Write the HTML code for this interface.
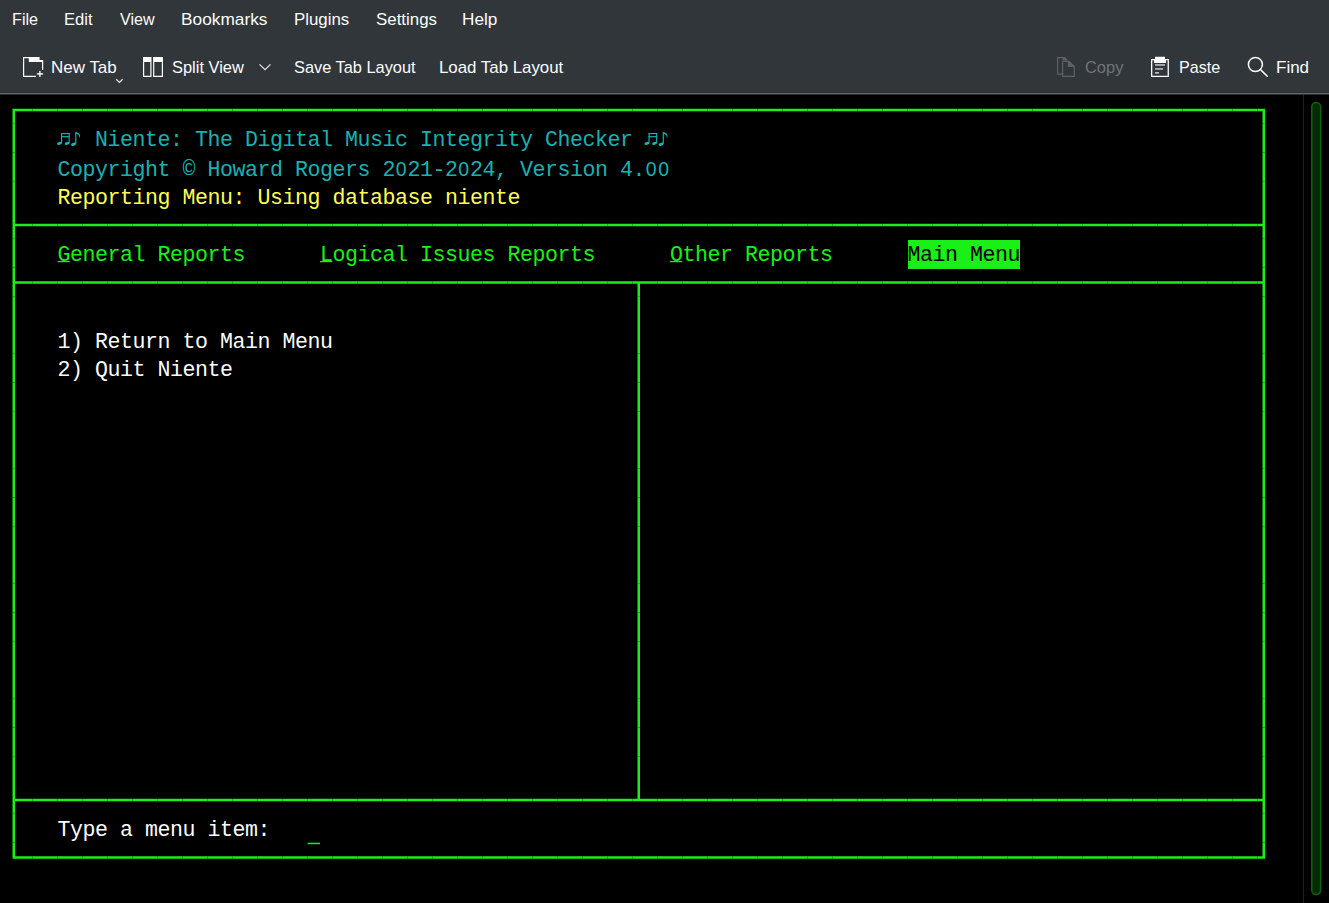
<!DOCTYPE html>
<html><head><meta charset="utf-8">
<style>
html,body{margin:0;padding:0;width:1329px;height:903px;overflow:hidden;background:#000;}
body{position:relative;font-family:"Liberation Sans",sans-serif;}
#chrome{position:absolute;left:0;top:0;width:1329px;height:93px;background:#31363b;}
#sep{position:absolute;left:0;top:92px;width:1329px;height:3px;background:linear-gradient(#2e3236 0,#2e3236 1px,#65686b 1px,#65686b 2px,#2e3134 2px,#2e3134 3px);}
.ui{position:absolute;color:#fcfcfc;font-size:16.4px;white-space:nowrap;line-height:20px;transform-origin:0 0;}
.dis{color:#707479;}
#term{position:absolute;left:0;top:95px;width:1329px;height:808px;background:#000;overflow:hidden;}
.t{position:absolute;font-family:"Liberation Mono",monospace;font-size:21.6px;letter-spacing:-0.46px;line-height:28.75px;white-space:pre;color:#18f018;}
.g{position:absolute;background:#18f018;}
.cy{color:#18b2b2;}
.ye{color:#ffff54;}
.wh{color:#fcfcfc;}
.bk{color:#000;}
.z{display:inline-block;width:12.5px;text-align:center;font-family:"Liberation Sans",sans-serif;font-size:19.5px;letter-spacing:0;}

#vsep{position:absolute;left:1303px;top:95px;width:1px;height:808px;background:#1f1f1f;}
</style></head><body>
<div id="chrome">
<svg id="icons" width="1329" height="93" style="position:absolute;left:0;top:0" shape-rendering="geometricPrecision">
<g fill="#fcfcfc">
<path d="M23 57H39.6V60.1H43.2V69.9H42V61.9H39.6V62H28.8V58.2H24.2V75.7H35.9V76.9H23Z"/>
<rect x="36.8" y="73.2" width="6.3" height="1.4"/>
<rect x="39.2" y="70.9" width="1.4" height="6"/>
<path fill-rule="evenodd" d="M143 57H151.5V76.9H143ZM144.2 62.1V75.7H150.3V62.1Z M153.1 57H163V76.9H153.1ZM154.3 62.1V75.7H161.8V62.1Z"/>
<path fill-rule="evenodd" d="M1151 59H1168.9V77.1H1151ZM1152.3 60.3V75.8H1167.6V60.3Z"/><path d="M1155 56.8H1165V59H1166V63H1154V59H1155Z"/>
<rect x="1155" y="64.3" width="10" height="1.3" opacity="0.85"/>
<rect x="1155" y="68.3" width="8" height="1.3" opacity="0.85"/>
<rect x="1155" y="72.2" width="4" height="1.3" opacity="0.85"/>
</g>
<g fill="none" stroke="#fcfcfc" stroke-width="1.5">
<circle cx="1255.4" cy="64.5" r="7"/>
<path d="M1260.5 69.6L1267.3 76.3" stroke-linecap="round"/>
</g>
<g fill="none" stroke="#e0e0e0" stroke-width="1.3">
<path d="M116.2 79.2L119.5 82.4L122.6 79.3"/>
<path d="M259.5 64.4L265 69.7L270.5 64.4"/>
</g>
<g fill="none" stroke="#5d6166" stroke-width="1.2">
<path d="M1062.3 74.2H1057.6V57.6H1064.6L1067.3 60.4"/>
<path d="M1062.6 61.4H1068.9L1074.3 66.6V76.3H1062.6Z"/>
</g>
<g fill="#5d6166">
<path d="M1062.6 57H1064.9L1067.7 60.3H1062.6Z"/>
<path d="M1067.8 61H1069.2L1074.9 66.6V67H1067.8Z"/>
</g>
</svg>
  <div class="ui" style="left:12.4px;top:9px;transform:scaleX(0.988)">File</div>
  <div class="ui" style="left:63.6px;top:9px;transform:scaleX(1.014)">Edit</div>
  <div class="ui" style="left:119.6px;top:9px;transform:scaleX(0.983)">View</div>
  <div class="ui" style="left:181.3px;top:9px;transform:scaleX(1.054)">Bookmarks</div>
  <div class="ui" style="left:293.6px;top:9px;transform:scaleX(1.028)">Plugins</div>
  <div class="ui" style="left:375.9px;top:9px;transform:scaleX(1.029)">Settings</div>
  <div class="ui" style="left:462.4px;top:9px;transform:scaleX(1.048)">Help</div>

  <div class="ui" style="left:51.0px;top:57px;transform:scaleX(1.036)">New Tab</div>
  <div class="ui" style="left:171.7px;top:57px;transform:scaleX(1.003)">Split View</div>
  <div class="ui" style="left:294.2px;top:57px;transform:scaleX(0.998)">Save Tab Layout</div>
  <div class="ui" style="left:438.9px;top:57px;transform:scaleX(1.028)">Load Tab Layout</div>
  <div class="ui dis" style="left:1084.8px;top:57px;transform:scaleX(1.003)">Copy</div>
  <div class="ui" style="left:1179.0px;top:57px;transform:scaleX(0.983)">Paste</div>
  <div class="ui" style="left:1276.3px;top:57px;transform:scaleX(1.037)">Find</div>
</div>
<div id="sep"></div>
<div id="term">
<svg id="lines" width="1329" height="808" viewBox="0 0 1329 808" style="position:absolute;left:0;top:0"><g fill="#18f018"><path d="M12.5 13.75 20 13.75 20 16.25 15 16.25 15 28.75 12.5 28.75Z"/><rect x="12.5" y="28.75" width="2.5" height="28.75"/><rect x="12.5" y="57.5" width="2.5" height="28.75"/><rect x="12.5" y="86.25" width="2.5" height="28.75"/><path d="M12.5 115 15 115 15 128.75 20 128.75 20 131.25 15 131.25 15 143.75 12.5 143.75Z"/><rect x="12.5" y="143.75" width="2.5" height="28.75"/><path d="M12.5 172.5 15 172.5 15 186.25 20 186.25 20 188.75 15 188.75 15 201.25 12.5 201.25Z"/><rect x="12.5" y="201.25" width="2.5" height="28.75"/><rect x="12.5" y="230" width="2.5" height="28.75"/><rect x="12.5" y="258.75" width="2.5" height="28.75"/><rect x="12.5" y="287.5" width="2.5" height="28.75"/><rect x="12.5" y="316.25" width="2.5" height="28.75"/><rect x="12.5" y="345" width="2.5" height="28.75"/><rect x="12.5" y="373.75" width="2.5" height="28.75"/><rect x="12.5" y="402.5" width="2.5" height="28.75"/><rect x="12.5" y="431.25" width="2.5" height="28.75"/><rect x="12.5" y="460" width="2.5" height="28.75"/><rect x="12.5" y="488.75" width="2.5" height="28.75"/><rect x="12.5" y="517.5" width="2.5" height="28.75"/><rect x="12.5" y="546.25" width="2.5" height="28.75"/><rect x="12.5" y="575" width="2.5" height="28.75"/><rect x="12.5" y="603.75" width="2.5" height="28.75"/><rect x="12.5" y="632.5" width="2.5" height="28.75"/><rect x="12.5" y="661.25" width="2.5" height="28.75"/><path d="M12.5 690 15 690 15 703.75 20 703.75 20 706.25 15 706.25 15 718.75 12.5 718.75Z"/><rect x="12.5" y="718.75" width="2.5" height="28.75"/><path d="M12.5 747.5 15 747.5 15 761.25 20 761.25 20 763.75 12.5 763.75Z"/><rect x="20" y="13.75" width="12.5" height="2.5"/><rect x="20" y="128.75" width="12.5" height="2.5"/><rect x="20" y="186.25" width="12.5" height="2.5"/><rect x="20" y="703.75" width="12.5" height="2.5"/><rect x="20" y="761.25" width="12.5" height="2.5"/><rect x="32.5" y="13.75" width="12.5" height="2.5"/><rect x="32.5" y="128.75" width="12.5" height="2.5"/><rect x="32.5" y="186.25" width="12.5" height="2.5"/><rect x="32.5" y="703.75" width="12.5" height="2.5"/><rect x="32.5" y="761.25" width="12.5" height="2.5"/><rect x="45" y="13.75" width="12.5" height="2.5"/><rect x="45" y="128.75" width="12.5" height="2.5"/><rect x="45" y="186.25" width="12.5" height="2.5"/><rect x="45" y="703.75" width="12.5" height="2.5"/><rect x="45" y="761.25" width="12.5" height="2.5"/><rect x="57.5" y="13.75" width="12.5" height="2.5"/><rect x="57.5" y="128.75" width="12.5" height="2.5"/><rect x="57.5" y="186.25" width="12.5" height="2.5"/><rect x="57.5" y="703.75" width="12.5" height="2.5"/><rect x="57.5" y="761.25" width="12.5" height="2.5"/><rect x="70" y="13.75" width="12.5" height="2.5"/><rect x="70" y="128.75" width="12.5" height="2.5"/><rect x="70" y="186.25" width="12.5" height="2.5"/><rect x="70" y="703.75" width="12.5" height="2.5"/><rect x="70" y="761.25" width="12.5" height="2.5"/><rect x="82.5" y="13.75" width="12.5" height="2.5"/><rect x="82.5" y="128.75" width="12.5" height="2.5"/><rect x="82.5" y="186.25" width="12.5" height="2.5"/><rect x="82.5" y="703.75" width="12.5" height="2.5"/><rect x="82.5" y="761.25" width="12.5" height="2.5"/><rect x="95" y="13.75" width="12.5" height="2.5"/><rect x="95" y="128.75" width="12.5" height="2.5"/><rect x="95" y="186.25" width="12.5" height="2.5"/><rect x="95" y="703.75" width="12.5" height="2.5"/><rect x="95" y="761.25" width="12.5" height="2.5"/><rect x="107.5" y="13.75" width="12.5" height="2.5"/><rect x="107.5" y="128.75" width="12.5" height="2.5"/><rect x="107.5" y="186.25" width="12.5" height="2.5"/><rect x="107.5" y="703.75" width="12.5" height="2.5"/><rect x="107.5" y="761.25" width="12.5" height="2.5"/><rect x="120" y="13.75" width="12.5" height="2.5"/><rect x="120" y="128.75" width="12.5" height="2.5"/><rect x="120" y="186.25" width="12.5" height="2.5"/><rect x="120" y="703.75" width="12.5" height="2.5"/><rect x="120" y="761.25" width="12.5" height="2.5"/><rect x="132.5" y="13.75" width="12.5" height="2.5"/><rect x="132.5" y="128.75" width="12.5" height="2.5"/><rect x="132.5" y="186.25" width="12.5" height="2.5"/><rect x="132.5" y="703.75" width="12.5" height="2.5"/><rect x="132.5" y="761.25" width="12.5" height="2.5"/><rect x="145" y="13.75" width="12.5" height="2.5"/><rect x="145" y="128.75" width="12.5" height="2.5"/><rect x="145" y="186.25" width="12.5" height="2.5"/><rect x="145" y="703.75" width="12.5" height="2.5"/><rect x="145" y="761.25" width="12.5" height="2.5"/><rect x="157.5" y="13.75" width="12.5" height="2.5"/><rect x="157.5" y="128.75" width="12.5" height="2.5"/><rect x="157.5" y="186.25" width="12.5" height="2.5"/><rect x="157.5" y="703.75" width="12.5" height="2.5"/><rect x="157.5" y="761.25" width="12.5" height="2.5"/><rect x="170" y="13.75" width="12.5" height="2.5"/><rect x="170" y="128.75" width="12.5" height="2.5"/><rect x="170" y="186.25" width="12.5" height="2.5"/><rect x="170" y="703.75" width="12.5" height="2.5"/><rect x="170" y="761.25" width="12.5" height="2.5"/><rect x="182.5" y="13.75" width="12.5" height="2.5"/><rect x="182.5" y="128.75" width="12.5" height="2.5"/><rect x="182.5" y="186.25" width="12.5" height="2.5"/><rect x="182.5" y="703.75" width="12.5" height="2.5"/><rect x="182.5" y="761.25" width="12.5" height="2.5"/><rect x="195" y="13.75" width="12.5" height="2.5"/><rect x="195" y="128.75" width="12.5" height="2.5"/><rect x="195" y="186.25" width="12.5" height="2.5"/><rect x="195" y="703.75" width="12.5" height="2.5"/><rect x="195" y="761.25" width="12.5" height="2.5"/><rect x="207.5" y="13.75" width="12.5" height="2.5"/><rect x="207.5" y="128.75" width="12.5" height="2.5"/><rect x="207.5" y="186.25" width="12.5" height="2.5"/><rect x="207.5" y="703.75" width="12.5" height="2.5"/><rect x="207.5" y="761.25" width="12.5" height="2.5"/><rect x="220" y="13.75" width="12.5" height="2.5"/><rect x="220" y="128.75" width="12.5" height="2.5"/><rect x="220" y="186.25" width="12.5" height="2.5"/><rect x="220" y="703.75" width="12.5" height="2.5"/><rect x="220" y="761.25" width="12.5" height="2.5"/><rect x="232.5" y="13.75" width="12.5" height="2.5"/><rect x="232.5" y="128.75" width="12.5" height="2.5"/><rect x="232.5" y="186.25" width="12.5" height="2.5"/><rect x="232.5" y="703.75" width="12.5" height="2.5"/><rect x="232.5" y="761.25" width="12.5" height="2.5"/><rect x="245" y="13.75" width="12.5" height="2.5"/><rect x="245" y="128.75" width="12.5" height="2.5"/><rect x="245" y="186.25" width="12.5" height="2.5"/><rect x="245" y="703.75" width="12.5" height="2.5"/><rect x="245" y="761.25" width="12.5" height="2.5"/><rect x="257.5" y="13.75" width="12.5" height="2.5"/><rect x="257.5" y="128.75" width="12.5" height="2.5"/><rect x="257.5" y="186.25" width="12.5" height="2.5"/><rect x="257.5" y="703.75" width="12.5" height="2.5"/><rect x="257.5" y="761.25" width="12.5" height="2.5"/><rect x="270" y="13.75" width="12.5" height="2.5"/><rect x="270" y="128.75" width="12.5" height="2.5"/><rect x="270" y="186.25" width="12.5" height="2.5"/><rect x="270" y="703.75" width="12.5" height="2.5"/><rect x="270" y="761.25" width="12.5" height="2.5"/><rect x="282.5" y="13.75" width="12.5" height="2.5"/><rect x="282.5" y="128.75" width="12.5" height="2.5"/><rect x="282.5" y="186.25" width="12.5" height="2.5"/><rect x="282.5" y="703.75" width="12.5" height="2.5"/><rect x="282.5" y="761.25" width="12.5" height="2.5"/><rect x="295" y="13.75" width="12.5" height="2.5"/><rect x="295" y="128.75" width="12.5" height="2.5"/><rect x="295" y="186.25" width="12.5" height="2.5"/><rect x="295" y="703.75" width="12.5" height="2.5"/><rect x="295" y="761.25" width="12.5" height="2.5"/><rect x="307.5" y="13.75" width="12.5" height="2.5"/><rect x="307.5" y="128.75" width="12.5" height="2.5"/><rect x="307.5" y="186.25" width="12.5" height="2.5"/><rect x="307.5" y="703.75" width="12.5" height="2.5"/><rect x="307.5" y="761.25" width="12.5" height="2.5"/><rect x="320" y="13.75" width="12.5" height="2.5"/><rect x="320" y="128.75" width="12.5" height="2.5"/><rect x="320" y="186.25" width="12.5" height="2.5"/><rect x="320" y="703.75" width="12.5" height="2.5"/><rect x="320" y="761.25" width="12.5" height="2.5"/><rect x="332.5" y="13.75" width="12.5" height="2.5"/><rect x="332.5" y="128.75" width="12.5" height="2.5"/><rect x="332.5" y="186.25" width="12.5" height="2.5"/><rect x="332.5" y="703.75" width="12.5" height="2.5"/><rect x="332.5" y="761.25" width="12.5" height="2.5"/><rect x="345" y="13.75" width="12.5" height="2.5"/><rect x="345" y="128.75" width="12.5" height="2.5"/><rect x="345" y="186.25" width="12.5" height="2.5"/><rect x="345" y="703.75" width="12.5" height="2.5"/><rect x="345" y="761.25" width="12.5" height="2.5"/><rect x="357.5" y="13.75" width="12.5" height="2.5"/><rect x="357.5" y="128.75" width="12.5" height="2.5"/><rect x="357.5" y="186.25" width="12.5" height="2.5"/><rect x="357.5" y="703.75" width="12.5" height="2.5"/><rect x="357.5" y="761.25" width="12.5" height="2.5"/><rect x="370" y="13.75" width="12.5" height="2.5"/><rect x="370" y="128.75" width="12.5" height="2.5"/><rect x="370" y="186.25" width="12.5" height="2.5"/><rect x="370" y="703.75" width="12.5" height="2.5"/><rect x="370" y="761.25" width="12.5" height="2.5"/><rect x="382.5" y="13.75" width="12.5" height="2.5"/><rect x="382.5" y="128.75" width="12.5" height="2.5"/><rect x="382.5" y="186.25" width="12.5" height="2.5"/><rect x="382.5" y="703.75" width="12.5" height="2.5"/><rect x="382.5" y="761.25" width="12.5" height="2.5"/><rect x="395" y="13.75" width="12.5" height="2.5"/><rect x="395" y="128.75" width="12.5" height="2.5"/><rect x="395" y="186.25" width="12.5" height="2.5"/><rect x="395" y="703.75" width="12.5" height="2.5"/><rect x="395" y="761.25" width="12.5" height="2.5"/><rect x="407.5" y="13.75" width="12.5" height="2.5"/><rect x="407.5" y="128.75" width="12.5" height="2.5"/><rect x="407.5" y="186.25" width="12.5" height="2.5"/><rect x="407.5" y="703.75" width="12.5" height="2.5"/><rect x="407.5" y="761.25" width="12.5" height="2.5"/><rect x="420" y="13.75" width="12.5" height="2.5"/><rect x="420" y="128.75" width="12.5" height="2.5"/><rect x="420" y="186.25" width="12.5" height="2.5"/><rect x="420" y="703.75" width="12.5" height="2.5"/><rect x="420" y="761.25" width="12.5" height="2.5"/><rect x="432.5" y="13.75" width="12.5" height="2.5"/><rect x="432.5" y="128.75" width="12.5" height="2.5"/><rect x="432.5" y="186.25" width="12.5" height="2.5"/><rect x="432.5" y="703.75" width="12.5" height="2.5"/><rect x="432.5" y="761.25" width="12.5" height="2.5"/><rect x="445" y="13.75" width="12.5" height="2.5"/><rect x="445" y="128.75" width="12.5" height="2.5"/><rect x="445" y="186.25" width="12.5" height="2.5"/><rect x="445" y="703.75" width="12.5" height="2.5"/><rect x="445" y="761.25" width="12.5" height="2.5"/><rect x="457.5" y="13.75" width="12.5" height="2.5"/><rect x="457.5" y="128.75" width="12.5" height="2.5"/><rect x="457.5" y="186.25" width="12.5" height="2.5"/><rect x="457.5" y="703.75" width="12.5" height="2.5"/><rect x="457.5" y="761.25" width="12.5" height="2.5"/><rect x="470" y="13.75" width="12.5" height="2.5"/><rect x="470" y="128.75" width="12.5" height="2.5"/><rect x="470" y="186.25" width="12.5" height="2.5"/><rect x="470" y="703.75" width="12.5" height="2.5"/><rect x="470" y="761.25" width="12.5" height="2.5"/><rect x="482.5" y="13.75" width="12.5" height="2.5"/><rect x="482.5" y="128.75" width="12.5" height="2.5"/><rect x="482.5" y="186.25" width="12.5" height="2.5"/><rect x="482.5" y="703.75" width="12.5" height="2.5"/><rect x="482.5" y="761.25" width="12.5" height="2.5"/><rect x="495" y="13.75" width="12.5" height="2.5"/><rect x="495" y="128.75" width="12.5" height="2.5"/><rect x="495" y="186.25" width="12.5" height="2.5"/><rect x="495" y="703.75" width="12.5" height="2.5"/><rect x="495" y="761.25" width="12.5" height="2.5"/><rect x="507.5" y="13.75" width="12.5" height="2.5"/><rect x="507.5" y="128.75" width="12.5" height="2.5"/><rect x="507.5" y="186.25" width="12.5" height="2.5"/><rect x="507.5" y="703.75" width="12.5" height="2.5"/><rect x="507.5" y="761.25" width="12.5" height="2.5"/><rect x="520" y="13.75" width="12.5" height="2.5"/><rect x="520" y="128.75" width="12.5" height="2.5"/><rect x="520" y="186.25" width="12.5" height="2.5"/><rect x="520" y="703.75" width="12.5" height="2.5"/><rect x="520" y="761.25" width="12.5" height="2.5"/><rect x="532.5" y="13.75" width="12.5" height="2.5"/><rect x="532.5" y="128.75" width="12.5" height="2.5"/><rect x="532.5" y="186.25" width="12.5" height="2.5"/><rect x="532.5" y="703.75" width="12.5" height="2.5"/><rect x="532.5" y="761.25" width="12.5" height="2.5"/><rect x="545" y="13.75" width="12.5" height="2.5"/><rect x="545" y="128.75" width="12.5" height="2.5"/><rect x="545" y="186.25" width="12.5" height="2.5"/><rect x="545" y="703.75" width="12.5" height="2.5"/><rect x="545" y="761.25" width="12.5" height="2.5"/><rect x="557.5" y="13.75" width="12.5" height="2.5"/><rect x="557.5" y="128.75" width="12.5" height="2.5"/><rect x="557.5" y="186.25" width="12.5" height="2.5"/><rect x="557.5" y="703.75" width="12.5" height="2.5"/><rect x="557.5" y="761.25" width="12.5" height="2.5"/><rect x="570" y="13.75" width="12.5" height="2.5"/><rect x="570" y="128.75" width="12.5" height="2.5"/><rect x="570" y="186.25" width="12.5" height="2.5"/><rect x="570" y="703.75" width="12.5" height="2.5"/><rect x="570" y="761.25" width="12.5" height="2.5"/><rect x="582.5" y="13.75" width="12.5" height="2.5"/><rect x="582.5" y="128.75" width="12.5" height="2.5"/><rect x="582.5" y="186.25" width="12.5" height="2.5"/><rect x="582.5" y="703.75" width="12.5" height="2.5"/><rect x="582.5" y="761.25" width="12.5" height="2.5"/><rect x="595" y="13.75" width="12.5" height="2.5"/><rect x="595" y="128.75" width="12.5" height="2.5"/><rect x="595" y="186.25" width="12.5" height="2.5"/><rect x="595" y="703.75" width="12.5" height="2.5"/><rect x="595" y="761.25" width="12.5" height="2.5"/><rect x="607.5" y="13.75" width="12.5" height="2.5"/><rect x="607.5" y="128.75" width="12.5" height="2.5"/><rect x="607.5" y="186.25" width="12.5" height="2.5"/><rect x="607.5" y="703.75" width="12.5" height="2.5"/><rect x="607.5" y="761.25" width="12.5" height="2.5"/><rect x="620" y="13.75" width="12.5" height="2.5"/><rect x="620" y="128.75" width="12.5" height="2.5"/><rect x="620" y="186.25" width="12.5" height="2.5"/><rect x="620" y="703.75" width="12.5" height="2.5"/><rect x="620" y="761.25" width="12.5" height="2.5"/><rect x="632.5" y="13.75" width="12.5" height="2.5"/><rect x="632.5" y="128.75" width="12.5" height="2.5"/><path d="M632.5 186.25 645 186.25 645 188.75 640 188.75 640 201.25 637.5 201.25 637.5 188.75 632.5 188.75Z"/><rect x="637.5" y="201.25" width="2.5" height="28.75"/><rect x="637.5" y="230" width="2.5" height="28.75"/><rect x="637.5" y="258.75" width="2.5" height="28.75"/><rect x="637.5" y="287.5" width="2.5" height="28.75"/><rect x="637.5" y="316.25" width="2.5" height="28.75"/><rect x="637.5" y="345" width="2.5" height="28.75"/><rect x="637.5" y="373.75" width="2.5" height="28.75"/><rect x="637.5" y="402.5" width="2.5" height="28.75"/><rect x="637.5" y="431.25" width="2.5" height="28.75"/><rect x="637.5" y="460" width="2.5" height="28.75"/><rect x="637.5" y="488.75" width="2.5" height="28.75"/><rect x="637.5" y="517.5" width="2.5" height="28.75"/><rect x="637.5" y="546.25" width="2.5" height="28.75"/><rect x="637.5" y="575" width="2.5" height="28.75"/><rect x="637.5" y="603.75" width="2.5" height="28.75"/><rect x="637.5" y="632.5" width="2.5" height="28.75"/><rect x="637.5" y="661.25" width="2.5" height="28.75"/><path d="M632.5 703.75 637.5 703.75 637.5 690 640 690 640 703.75 645 703.75 645 706.25 632.5 706.25Z"/><rect x="632.5" y="761.25" width="12.5" height="2.5"/><rect x="645" y="13.75" width="12.5" height="2.5"/><rect x="645" y="128.75" width="12.5" height="2.5"/><rect x="645" y="186.25" width="12.5" height="2.5"/><rect x="645" y="703.75" width="12.5" height="2.5"/><rect x="645" y="761.25" width="12.5" height="2.5"/><rect x="657.5" y="13.75" width="12.5" height="2.5"/><rect x="657.5" y="128.75" width="12.5" height="2.5"/><rect x="657.5" y="186.25" width="12.5" height="2.5"/><rect x="657.5" y="703.75" width="12.5" height="2.5"/><rect x="657.5" y="761.25" width="12.5" height="2.5"/><rect x="670" y="13.75" width="12.5" height="2.5"/><rect x="670" y="128.75" width="12.5" height="2.5"/><rect x="670" y="186.25" width="12.5" height="2.5"/><rect x="670" y="703.75" width="12.5" height="2.5"/><rect x="670" y="761.25" width="12.5" height="2.5"/><rect x="682.5" y="13.75" width="12.5" height="2.5"/><rect x="682.5" y="128.75" width="12.5" height="2.5"/><rect x="682.5" y="186.25" width="12.5" height="2.5"/><rect x="682.5" y="703.75" width="12.5" height="2.5"/><rect x="682.5" y="761.25" width="12.5" height="2.5"/><rect x="695" y="13.75" width="12.5" height="2.5"/><rect x="695" y="128.75" width="12.5" height="2.5"/><rect x="695" y="186.25" width="12.5" height="2.5"/><rect x="695" y="703.75" width="12.5" height="2.5"/><rect x="695" y="761.25" width="12.5" height="2.5"/><rect x="707.5" y="13.75" width="12.5" height="2.5"/><rect x="707.5" y="128.75" width="12.5" height="2.5"/><rect x="707.5" y="186.25" width="12.5" height="2.5"/><rect x="707.5" y="703.75" width="12.5" height="2.5"/><rect x="707.5" y="761.25" width="12.5" height="2.5"/><rect x="720" y="13.75" width="12.5" height="2.5"/><rect x="720" y="128.75" width="12.5" height="2.5"/><rect x="720" y="186.25" width="12.5" height="2.5"/><rect x="720" y="703.75" width="12.5" height="2.5"/><rect x="720" y="761.25" width="12.5" height="2.5"/><rect x="732.5" y="13.75" width="12.5" height="2.5"/><rect x="732.5" y="128.75" width="12.5" height="2.5"/><rect x="732.5" y="186.25" width="12.5" height="2.5"/><rect x="732.5" y="703.75" width="12.5" height="2.5"/><rect x="732.5" y="761.25" width="12.5" height="2.5"/><rect x="745" y="13.75" width="12.5" height="2.5"/><rect x="745" y="128.75" width="12.5" height="2.5"/><rect x="745" y="186.25" width="12.5" height="2.5"/><rect x="745" y="703.75" width="12.5" height="2.5"/><rect x="745" y="761.25" width="12.5" height="2.5"/><rect x="757.5" y="13.75" width="12.5" height="2.5"/><rect x="757.5" y="128.75" width="12.5" height="2.5"/><rect x="757.5" y="186.25" width="12.5" height="2.5"/><rect x="757.5" y="703.75" width="12.5" height="2.5"/><rect x="757.5" y="761.25" width="12.5" height="2.5"/><rect x="770" y="13.75" width="12.5" height="2.5"/><rect x="770" y="128.75" width="12.5" height="2.5"/><rect x="770" y="186.25" width="12.5" height="2.5"/><rect x="770" y="703.75" width="12.5" height="2.5"/><rect x="770" y="761.25" width="12.5" height="2.5"/><rect x="782.5" y="13.75" width="12.5" height="2.5"/><rect x="782.5" y="128.75" width="12.5" height="2.5"/><rect x="782.5" y="186.25" width="12.5" height="2.5"/><rect x="782.5" y="703.75" width="12.5" height="2.5"/><rect x="782.5" y="761.25" width="12.5" height="2.5"/><rect x="795" y="13.75" width="12.5" height="2.5"/><rect x="795" y="128.75" width="12.5" height="2.5"/><rect x="795" y="186.25" width="12.5" height="2.5"/><rect x="795" y="703.75" width="12.5" height="2.5"/><rect x="795" y="761.25" width="12.5" height="2.5"/><rect x="807.5" y="13.75" width="12.5" height="2.5"/><rect x="807.5" y="128.75" width="12.5" height="2.5"/><rect x="807.5" y="186.25" width="12.5" height="2.5"/><rect x="807.5" y="703.75" width="12.5" height="2.5"/><rect x="807.5" y="761.25" width="12.5" height="2.5"/><rect x="820" y="13.75" width="12.5" height="2.5"/><rect x="820" y="128.75" width="12.5" height="2.5"/><rect x="820" y="186.25" width="12.5" height="2.5"/><rect x="820" y="703.75" width="12.5" height="2.5"/><rect x="820" y="761.25" width="12.5" height="2.5"/><rect x="832.5" y="13.75" width="12.5" height="2.5"/><rect x="832.5" y="128.75" width="12.5" height="2.5"/><rect x="832.5" y="186.25" width="12.5" height="2.5"/><rect x="832.5" y="703.75" width="12.5" height="2.5"/><rect x="832.5" y="761.25" width="12.5" height="2.5"/><rect x="845" y="13.75" width="12.5" height="2.5"/><rect x="845" y="128.75" width="12.5" height="2.5"/><rect x="845" y="186.25" width="12.5" height="2.5"/><rect x="845" y="703.75" width="12.5" height="2.5"/><rect x="845" y="761.25" width="12.5" height="2.5"/><rect x="857.5" y="13.75" width="12.5" height="2.5"/><rect x="857.5" y="128.75" width="12.5" height="2.5"/><rect x="857.5" y="186.25" width="12.5" height="2.5"/><rect x="857.5" y="703.75" width="12.5" height="2.5"/><rect x="857.5" y="761.25" width="12.5" height="2.5"/><rect x="870" y="13.75" width="12.5" height="2.5"/><rect x="870" y="128.75" width="12.5" height="2.5"/><rect x="870" y="186.25" width="12.5" height="2.5"/><rect x="870" y="703.75" width="12.5" height="2.5"/><rect x="870" y="761.25" width="12.5" height="2.5"/><rect x="882.5" y="13.75" width="12.5" height="2.5"/><rect x="882.5" y="128.75" width="12.5" height="2.5"/><rect x="882.5" y="186.25" width="12.5" height="2.5"/><rect x="882.5" y="703.75" width="12.5" height="2.5"/><rect x="882.5" y="761.25" width="12.5" height="2.5"/><rect x="895" y="13.75" width="12.5" height="2.5"/><rect x="895" y="128.75" width="12.5" height="2.5"/><rect x="895" y="186.25" width="12.5" height="2.5"/><rect x="895" y="703.75" width="12.5" height="2.5"/><rect x="895" y="761.25" width="12.5" height="2.5"/><rect x="907.5" y="13.75" width="12.5" height="2.5"/><rect x="907.5" y="128.75" width="12.5" height="2.5"/><rect x="907.5" y="186.25" width="12.5" height="2.5"/><rect x="907.5" y="703.75" width="12.5" height="2.5"/><rect x="907.5" y="761.25" width="12.5" height="2.5"/><rect x="920" y="13.75" width="12.5" height="2.5"/><rect x="920" y="128.75" width="12.5" height="2.5"/><rect x="920" y="186.25" width="12.5" height="2.5"/><rect x="920" y="703.75" width="12.5" height="2.5"/><rect x="920" y="761.25" width="12.5" height="2.5"/><rect x="932.5" y="13.75" width="12.5" height="2.5"/><rect x="932.5" y="128.75" width="12.5" height="2.5"/><rect x="932.5" y="186.25" width="12.5" height="2.5"/><rect x="932.5" y="703.75" width="12.5" height="2.5"/><rect x="932.5" y="761.25" width="12.5" height="2.5"/><rect x="945" y="13.75" width="12.5" height="2.5"/><rect x="945" y="128.75" width="12.5" height="2.5"/><rect x="945" y="186.25" width="12.5" height="2.5"/><rect x="945" y="703.75" width="12.5" height="2.5"/><rect x="945" y="761.25" width="12.5" height="2.5"/><rect x="957.5" y="13.75" width="12.5" height="2.5"/><rect x="957.5" y="128.75" width="12.5" height="2.5"/><rect x="957.5" y="186.25" width="12.5" height="2.5"/><rect x="957.5" y="703.75" width="12.5" height="2.5"/><rect x="957.5" y="761.25" width="12.5" height="2.5"/><rect x="970" y="13.75" width="12.5" height="2.5"/><rect x="970" y="128.75" width="12.5" height="2.5"/><rect x="970" y="186.25" width="12.5" height="2.5"/><rect x="970" y="703.75" width="12.5" height="2.5"/><rect x="970" y="761.25" width="12.5" height="2.5"/><rect x="982.5" y="13.75" width="12.5" height="2.5"/><rect x="982.5" y="128.75" width="12.5" height="2.5"/><rect x="982.5" y="186.25" width="12.5" height="2.5"/><rect x="982.5" y="703.75" width="12.5" height="2.5"/><rect x="982.5" y="761.25" width="12.5" height="2.5"/><rect x="995" y="13.75" width="12.5" height="2.5"/><rect x="995" y="128.75" width="12.5" height="2.5"/><rect x="995" y="186.25" width="12.5" height="2.5"/><rect x="995" y="703.75" width="12.5" height="2.5"/><rect x="995" y="761.25" width="12.5" height="2.5"/><rect x="1007.5" y="13.75" width="12.5" height="2.5"/><rect x="1007.5" y="128.75" width="12.5" height="2.5"/><rect x="1007.5" y="186.25" width="12.5" height="2.5"/><rect x="1007.5" y="703.75" width="12.5" height="2.5"/><rect x="1007.5" y="761.25" width="12.5" height="2.5"/><rect x="1020" y="13.75" width="12.5" height="2.5"/><rect x="1020" y="128.75" width="12.5" height="2.5"/><rect x="1020" y="186.25" width="12.5" height="2.5"/><rect x="1020" y="703.75" width="12.5" height="2.5"/><rect x="1020" y="761.25" width="12.5" height="2.5"/><rect x="1032.5" y="13.75" width="12.5" height="2.5"/><rect x="1032.5" y="128.75" width="12.5" height="2.5"/><rect x="1032.5" y="186.25" width="12.5" height="2.5"/><rect x="1032.5" y="703.75" width="12.5" height="2.5"/><rect x="1032.5" y="761.25" width="12.5" height="2.5"/><rect x="1045" y="13.75" width="12.5" height="2.5"/><rect x="1045" y="128.75" width="12.5" height="2.5"/><rect x="1045" y="186.25" width="12.5" height="2.5"/><rect x="1045" y="703.75" width="12.5" height="2.5"/><rect x="1045" y="761.25" width="12.5" height="2.5"/><rect x="1057.5" y="13.75" width="12.5" height="2.5"/><rect x="1057.5" y="128.75" width="12.5" height="2.5"/><rect x="1057.5" y="186.25" width="12.5" height="2.5"/><rect x="1057.5" y="703.75" width="12.5" height="2.5"/><rect x="1057.5" y="761.25" width="12.5" height="2.5"/><rect x="1070" y="13.75" width="12.5" height="2.5"/><rect x="1070" y="128.75" width="12.5" height="2.5"/><rect x="1070" y="186.25" width="12.5" height="2.5"/><rect x="1070" y="703.75" width="12.5" height="2.5"/><rect x="1070" y="761.25" width="12.5" height="2.5"/><rect x="1082.5" y="13.75" width="12.5" height="2.5"/><rect x="1082.5" y="128.75" width="12.5" height="2.5"/><rect x="1082.5" y="186.25" width="12.5" height="2.5"/><rect x="1082.5" y="703.75" width="12.5" height="2.5"/><rect x="1082.5" y="761.25" width="12.5" height="2.5"/><rect x="1095" y="13.75" width="12.5" height="2.5"/><rect x="1095" y="128.75" width="12.5" height="2.5"/><rect x="1095" y="186.25" width="12.5" height="2.5"/><rect x="1095" y="703.75" width="12.5" height="2.5"/><rect x="1095" y="761.25" width="12.5" height="2.5"/><rect x="1107.5" y="13.75" width="12.5" height="2.5"/><rect x="1107.5" y="128.75" width="12.5" height="2.5"/><rect x="1107.5" y="186.25" width="12.5" height="2.5"/><rect x="1107.5" y="703.75" width="12.5" height="2.5"/><rect x="1107.5" y="761.25" width="12.5" height="2.5"/><rect x="1120" y="13.75" width="12.5" height="2.5"/><rect x="1120" y="128.75" width="12.5" height="2.5"/><rect x="1120" y="186.25" width="12.5" height="2.5"/><rect x="1120" y="703.75" width="12.5" height="2.5"/><rect x="1120" y="761.25" width="12.5" height="2.5"/><rect x="1132.5" y="13.75" width="12.5" height="2.5"/><rect x="1132.5" y="128.75" width="12.5" height="2.5"/><rect x="1132.5" y="186.25" width="12.5" height="2.5"/><rect x="1132.5" y="703.75" width="12.5" height="2.5"/><rect x="1132.5" y="761.25" width="12.5" height="2.5"/><rect x="1145" y="13.75" width="12.5" height="2.5"/><rect x="1145" y="128.75" width="12.5" height="2.5"/><rect x="1145" y="186.25" width="12.5" height="2.5"/><rect x="1145" y="703.75" width="12.5" height="2.5"/><rect x="1145" y="761.25" width="12.5" height="2.5"/><rect x="1157.5" y="13.75" width="12.5" height="2.5"/><rect x="1157.5" y="128.75" width="12.5" height="2.5"/><rect x="1157.5" y="186.25" width="12.5" height="2.5"/><rect x="1157.5" y="703.75" width="12.5" height="2.5"/><rect x="1157.5" y="761.25" width="12.5" height="2.5"/><rect x="1170" y="13.75" width="12.5" height="2.5"/><rect x="1170" y="128.75" width="12.5" height="2.5"/><rect x="1170" y="186.25" width="12.5" height="2.5"/><rect x="1170" y="703.75" width="12.5" height="2.5"/><rect x="1170" y="761.25" width="12.5" height="2.5"/><rect x="1182.5" y="13.75" width="12.5" height="2.5"/><rect x="1182.5" y="128.75" width="12.5" height="2.5"/><rect x="1182.5" y="186.25" width="12.5" height="2.5"/><rect x="1182.5" y="703.75" width="12.5" height="2.5"/><rect x="1182.5" y="761.25" width="12.5" height="2.5"/><rect x="1195" y="13.75" width="12.5" height="2.5"/><rect x="1195" y="128.75" width="12.5" height="2.5"/><rect x="1195" y="186.25" width="12.5" height="2.5"/><rect x="1195" y="703.75" width="12.5" height="2.5"/><rect x="1195" y="761.25" width="12.5" height="2.5"/><rect x="1207.5" y="13.75" width="12.5" height="2.5"/><rect x="1207.5" y="128.75" width="12.5" height="2.5"/><rect x="1207.5" y="186.25" width="12.5" height="2.5"/><rect x="1207.5" y="703.75" width="12.5" height="2.5"/><rect x="1207.5" y="761.25" width="12.5" height="2.5"/><rect x="1220" y="13.75" width="12.5" height="2.5"/><rect x="1220" y="128.75" width="12.5" height="2.5"/><rect x="1220" y="186.25" width="12.5" height="2.5"/><rect x="1220" y="703.75" width="12.5" height="2.5"/><rect x="1220" y="761.25" width="12.5" height="2.5"/><rect x="1232.5" y="13.75" width="12.5" height="2.5"/><rect x="1232.5" y="128.75" width="12.5" height="2.5"/><rect x="1232.5" y="186.25" width="12.5" height="2.5"/><rect x="1232.5" y="703.75" width="12.5" height="2.5"/><rect x="1232.5" y="761.25" width="12.5" height="2.5"/><rect x="1245" y="13.75" width="12.5" height="2.5"/><rect x="1245" y="128.75" width="12.5" height="2.5"/><rect x="1245" y="186.25" width="12.5" height="2.5"/><rect x="1245" y="703.75" width="12.5" height="2.5"/><rect x="1245" y="761.25" width="12.5" height="2.5"/><path d="M1257.5 13.75 1265 13.75 1265 28.75 1262.5 28.75 1262.5 16.25 1257.5 16.25Z"/><rect x="1262.5" y="28.75" width="2.5" height="28.75"/><rect x="1262.5" y="57.5" width="2.5" height="28.75"/><rect x="1262.5" y="86.25" width="2.5" height="28.75"/><path d="M1262.5 115 1265 115 1265 143.75 1262.5 143.75 1262.5 131.25 1257.5 131.25 1257.5 128.75 1262.5 128.75Z"/><rect x="1262.5" y="143.75" width="2.5" height="28.75"/><path d="M1262.5 172.5 1265 172.5 1265 201.25 1262.5 201.25 1262.5 188.75 1257.5 188.75 1257.5 186.25 1262.5 186.25Z"/><rect x="1262.5" y="201.25" width="2.5" height="28.75"/><rect x="1262.5" y="230" width="2.5" height="28.75"/><rect x="1262.5" y="258.75" width="2.5" height="28.75"/><rect x="1262.5" y="287.5" width="2.5" height="28.75"/><rect x="1262.5" y="316.25" width="2.5" height="28.75"/><rect x="1262.5" y="345" width="2.5" height="28.75"/><rect x="1262.5" y="373.75" width="2.5" height="28.75"/><rect x="1262.5" y="402.5" width="2.5" height="28.75"/><rect x="1262.5" y="431.25" width="2.5" height="28.75"/><rect x="1262.5" y="460" width="2.5" height="28.75"/><rect x="1262.5" y="488.75" width="2.5" height="28.75"/><rect x="1262.5" y="517.5" width="2.5" height="28.75"/><rect x="1262.5" y="546.25" width="2.5" height="28.75"/><rect x="1262.5" y="575" width="2.5" height="28.75"/><rect x="1262.5" y="603.75" width="2.5" height="28.75"/><rect x="1262.5" y="632.5" width="2.5" height="28.75"/><rect x="1262.5" y="661.25" width="2.5" height="28.75"/><path d="M1262.5 690 1265 690 1265 718.75 1262.5 718.75 1262.5 706.25 1257.5 706.25 1257.5 703.75 1262.5 703.75Z"/><rect x="1262.5" y="718.75" width="2.5" height="28.75"/><path d="M1262.5 747.5 1265 747.5 1265 763.75 1257.5 763.75 1257.5 761.25 1262.5 761.25Z"/></g></svg>
<div class="t cy" style="left:57.5px;top:31.35px;">   Niente: The Digital Music Integrity Checker</div>
<div class="t cy" style="left:57.5px;top:60.1px;">Copyright © Howard Rogers 2<span class="z">0</span>21-2<span class="z">0</span>24, Version 4.<span class="z">0</span><span class="z">0</span></div>
<div class="t ye" style="left:57.5px;top:88.85px;">Reporting Menu: Using database niente</div>
<div class="t " style="left:57.5px;top:146.35px;"><span class="u">G</span>eneral Reports</div>
<div class="t " style="left:320px;top:146.35px;"><span class="u">L</span>ogical Issues Reports</div>
<div class="t " style="left:670px;top:146.35px;"><span class="u">O</span>ther Reports</div>
<div class="g" style="left:908px;top:145px;width:112px;height:29px"></div>
<div class="t bk" style="left:907.5px;top:146.35px;">Main Menu</div>
<div class="t wh" style="left:57.5px;top:232.6px;">1) Return to Main Menu</div>
<div class="t wh" style="left:57.5px;top:261.35px;">2) Quit Niente</div>
<div class="t wh" style="left:57.5px;top:721.35px;">Type a menu item:</div>
<svg style="position:absolute;left:0;top:0" width="1329" height="808"><g fill="#18f018"><rect x="57.5" y="166" width="12.3" height="1.2"/><rect x="320" y="166" width="12.3" height="1.2"/><rect x="670" y="166" width="12.3" height="1.2"/><g transform="translate(57.5,28.75)"><g fill="#18b2b2"><rect x="3.5" y="9.25" width="1.1" height="10.4"/><rect x="11.1" y="9.25" width="1.1" height="10.4"/><rect x="3.5" y="9.25" width="8.7" height="1.15"/><rect x="3.5" y="12.35" width="8.7" height="1.15"/><ellipse cx="1.9" cy="19.65" rx="2.4" ry="1.45" transform="rotate(-15 1.9 19.65)"/><ellipse cx="9.5" cy="19.65" rx="2.4" ry="1.45" transform="rotate(-15 9.5 19.65)"/><rect x="17.7" y="8.4" width="1.15" height="11.6"/><ellipse cx="16.1" cy="20.5" rx="2.6" ry="1.6" transform="rotate(-15 16.1 20.5)"/><path d="M18.3 8.3C20.8 9.2 23.4 10.2 22.3 13.9L21.6 13.6C22.2 11.6 20.6 10.6 18.3 10.1Z"/></g></g><g transform="translate(645,28.75)"><g fill="#18b2b2"><rect x="3.5" y="9.25" width="1.1" height="10.4"/><rect x="11.1" y="9.25" width="1.1" height="10.4"/><rect x="3.5" y="9.25" width="8.7" height="1.15"/><rect x="3.5" y="12.35" width="8.7" height="1.15"/><ellipse cx="1.9" cy="19.65" rx="2.4" ry="1.45" transform="rotate(-15 1.9 19.65)"/><ellipse cx="9.5" cy="19.65" rx="2.4" ry="1.45" transform="rotate(-15 9.5 19.65)"/><rect x="17.7" y="8.4" width="1.15" height="11.6"/><ellipse cx="16.1" cy="20.5" rx="2.6" ry="1.6" transform="rotate(-15 16.1 20.5)"/><path d="M18.3 8.3C20.8 9.2 23.4 10.2 22.3 13.9L21.6 13.6C22.2 11.6 20.6 10.6 18.3 10.1Z"/></g></g><rect x="307.6" y="747.7" width="12.4" height="1.5"/></g></svg>
</div>
<div id="vsep"></div>
<svg style="position:absolute;left:0;top:0" width="1329" height="903"><rect x="1311.75" y="102.6" width="8.9" height="791.8" rx="4.45" fill="#052b05" stroke="#0c640c" stroke-width="1.5"/></svg>
</body></html>
